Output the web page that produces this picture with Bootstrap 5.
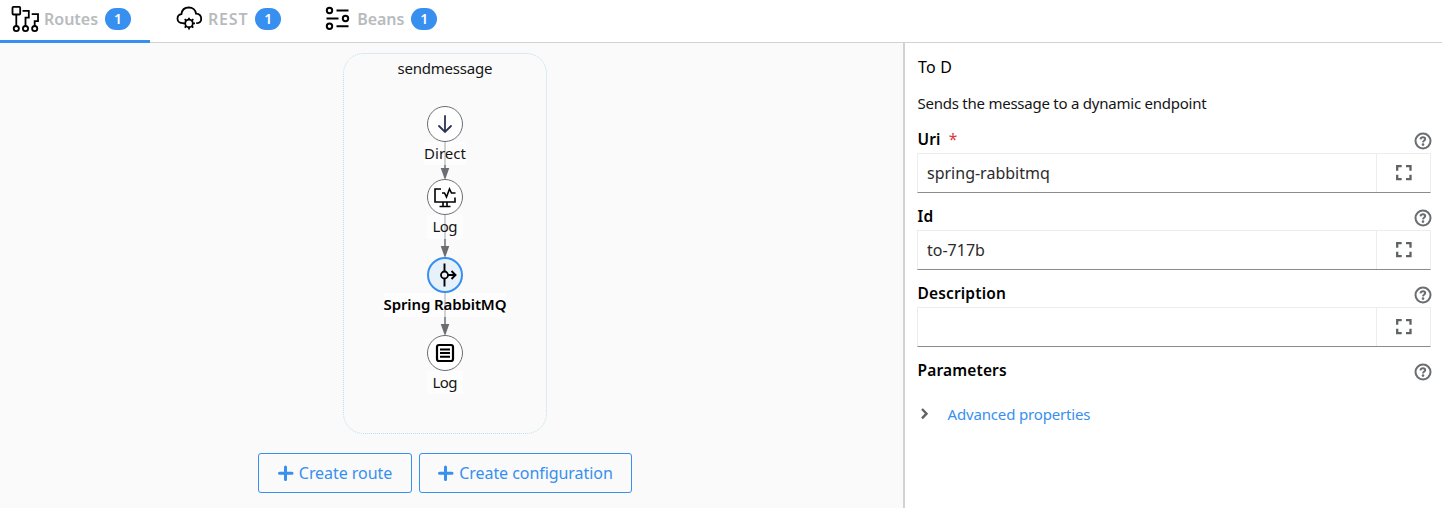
<!DOCTYPE html>
<html lang="en">
<head>
<meta charset="utf-8">
<title>Route designer</title>
<link href="https://cdn.jsdelivr.net/npm/bootstrap@5.3.0/dist/css/bootstrap.min.css" rel="stylesheet">
<script src="https://cdn.jsdelivr.net/npm/bootstrap@5.3.0/dist/js/bootstrap.bundle.min.js"></script>
<style>
body{font-family:"Noto Sans",sans-serif;font-size:16px;line-height:24px;color:#151515;height:508px;overflow:hidden;background:#fff}
.topbar{height:43px;border-bottom:1px solid #d2d2d2}
.topbar .nav-link{height:43px;padding:0 0 3px;color:#b8bbbe;font-weight:600;border-bottom:3px solid transparent}
.topbar .nav-link.active{border-bottom-color:#378fef;width:150px;padding-left:10px}
.topbar .nav-link svg{width:30px;height:30px;flex:none}
.tab-title{font-size:16px;white-space:nowrap;margin-left:4px;margin-right:7px}
.tab-rest{margin-left:25px}
.tab-rest .tab-title{margin-left:3px;letter-spacing:.8px}
.tab-beans{margin-left:42px}
.tab-beans .tab-title{margin-left:4px;letter-spacing:-.1px}
.count{background:#378fef;width:26px;height:22px;border-radius:11px;padding:0;line-height:22px;font-size:14px;font-weight:600}
.designer{width:903px;background:#fafafa;height:465px}
.designer .diagram{width:903px;height:410px;display:block}
.actions{margin-left:258px;gap:7px}
.btn-create{height:40px;border:1px solid #378fef;border-radius:3px;color:#378fef;padding:0;font-size:16px;line-height:38px;white-space:nowrap;letter-spacing:-.06px}
.btn-create svg{margin-right:5px}
.btn-route{width:154px}
.btn-config{width:213px}
.properties{border-left:2px solid #d2d2d2;height:465px;padding:12px 11px 0 12px}
.heading{font-size:16px;height:24px;padding-left:1px;letter-spacing:.2px;color:#000}
.about{font-size:15px;height:24px;margin:12px 0;padding-left:.5px;letter-spacing:-.24px}
.prop-label{height:26px;font-weight:600;font-size:15.5px;color:#000;padding-left:.5px;letter-spacing:.15px}
.prop-label svg{margin:4.500px -.5px 0 0}
.field{height:77px}
.field .input-group{height:40px;border:1px solid #ededed;border-bottom:1px solid #8a8d90;flex-wrap:nowrap}
.field .form-control{border:0;border-radius:0;padding:0 9px;font-size:16px;color:#2b2b2b;height:38px}
.field .expand-btn{width:54px;border:0;border-left:1px solid #ededed;border-radius:0;padding:0;height:38px}
.expand-btn svg{display:block;margin:0 auto}
.link-adv{color:#378fef;font-size:15px;text-decoration:none;margin-top:18px;letter-spacing:-.16px}
.link-adv span{margin-left:14.500px}
</style>
</head>
<body>
<svg width="0" height="0" class="position-absolute">
<symbol id="help" viewBox="0 0 18 18"><circle cx="9" cy="9" r="7.500" fill="none" stroke="#6a6e73" stroke-width="2"/><path d="M6.500 7.300C6.700 5.900 7.800 5.300 9 5.300c1.300 0 2.200.7 2.200 1.800C11.200 8.600 9.200 8.500 9 10.400" fill="none" stroke="#6a6e73" stroke-width="2"/><circle cx="9" cy="12.600" r="1.300" fill="#6a6e73"/></symbol>
<symbol id="expand" viewBox="0 0 16 16"><path d="M1.200 5.700V1.200H5.700M10 1.200h4.500V5.700M14.500 9.700v4.500H10M5.700 14.200H1.200V9.700" fill="none" stroke="#606366" stroke-width="2.300"/></symbol>
<symbol id="plus" viewBox="0 0 16 16"><path d="M7.500 2v12.500M1.500 8.200h12.500" fill="none" stroke="#378fef" stroke-width="3" stroke-linecap="round"/></symbol>
</svg>
<nav class="topbar nav flex-nowrap">
<a class="nav-link active d-flex align-items-center" href="#"><svg viewBox="0 0 30 30" fill="none" stroke="#000" stroke-width="1.800"><rect x="2.500" y="2.800" width="7.700" height="7.700" rx="1"/><path d="M6.300 10.500V22M12.500 6.800h6.300v6.900h-3.300V22M21.700 10.200h6.300v7h-3.300V22"/><circle cx="6.300" cy="24.600" r="2.600"/><circle cx="15.500" cy="24.600" r="2.600"/><circle cx="24.700" cy="24.600" r="2.600"/></svg><span class="tab-title">Routes</span><span class="badge count">1</span></a>
<a class="nav-link tab-rest d-flex align-items-center" href="#"><svg viewBox="0 0 30 30" fill="none" stroke="#000" stroke-width="1.800"><path d="M8.500 19.200H8c-3.200 0-5.500-1.800-5.500-4.500 0-2.500 1.700-4.200 3.900-4.500C6.900 6.300 9.700 3.500 13.800 3.500c3.900 0 6.800 2.600 7.200 6.200 3.200.2 5.200 2.300 5.200 5.200 0 2.500-1.900 4.200-5 4.300"/><circle cx="14" cy="19.400" r="3.800"/><path d="M14 13.700v2M14 23.200v2.300M8 19.400h2.300M17.800 19.400H20M9.700 15.100l1.700 1.700M16.600 22l1.700 1.700M18.300 15.100l-1.700 1.700M11.400 22l-1.700 1.700"/></svg><span class="tab-title">REST</span><span class="badge count">1</span></a>
<a class="nav-link tab-beans d-flex align-items-center" href="#"><svg viewBox="0 0 30 30" fill="none" stroke="#000" stroke-width="2"><circle cx="6.500" cy="6.500" r="2.700"/><circle cx="22.500" cy="14.500" r="2.700"/><circle cx="6.500" cy="22.300" r="2.700"/><path d="M13.500 6.500h12M3.500 14.500h12M13.500 22.300h12"/></svg><span class="tab-title">Beans</span><span class="badge count">1</span></a>
</nav>
<main class="d-flex">
<section class="designer flex-shrink-0">
<svg class="diagram" viewBox="0 43 903 410" font-family="Noto Sans,sans-serif" font-size="15" text-anchor="middle" fill="#151515">
<rect x="343.500" y="53.500" width="203" height="380" rx="20" fill="none" stroke="#b9def0" stroke-dasharray="1 1"/>
<path d="M445 142v28M445 215v33M445 293v33" stroke="#6a6e73" stroke-width="1.500"/>
<path d="M440.700 168h8.600l-4.300 12zM440.700 246h8.600l-4.300 12zM440.700 324h8.600l-4.300 12z" fill="#6a6e73"/>
<path d="M424 142h42v23h-42zM427 215h36v24h-36zM384 293h122v24H384zM427 371h36v23h-36z" fill="#fff" fill-opacity=".6"/>
<g fill="#fff" stroke="#6a6e73"><circle cx="445" cy="124" r="17.500"/><circle cx="445" cy="197" r="17.500"/><circle cx="445" cy="353" r="17.500"/></g>
<circle cx="445" cy="275" r="17" fill="#e7f1fa" stroke="#378fef" stroke-width="2"/>
<path d="M445 116v16M439 126l6 6 6-6" fill="none" stroke="#2c3454" stroke-width="1.800" stroke-linecap="round"/>
<g fill="none" stroke="#000" stroke-width="1.600"><path d="M441 189h-6v13h20v-4.500M442 193h2.500l2 4 3-8 2 4h4M443 202v4M447 202v4M439.500 206.500h11"/>
<path d="M444.500 263.500v8M444.500 278v8.500M448 275h7M451.500 271l4 4-4 4" stroke-width="1.900"/><circle cx="444.500" cy="275" r="3.500" stroke-width="1.800"/>
<rect x="437" y="345" width="16" height="16" rx="2" stroke-width="2.200"/><path d="M440 349.500h10M440 353h10M440 356.800h10" stroke-width="1.900"/></g>
<text x="445" y="74" textLength="95">sendmessage</text>
<text x="445" y="159" textLength="42">Direct</text>
<text x="445" y="232" textLength="25">Log</text>
<text x="445" y="310" textLength="123" font-weight="600" fill="#000">Spring RabbitMQ</text>
<text x="445" y="388" textLength="25">Log</text>
</svg>
<div class="actions d-flex">
<button class="btn btn-create btn-route d-flex align-items-center justify-content-center"><svg width="16" height="16"><use href="#plus"/></svg><span>Create route</span></button>
<button class="btn btn-create btn-config d-flex align-items-center justify-content-center"><svg width="16" height="16"><use href="#plus"/></svg><span>Create configuration</span></button>
</div>
</section>
<aside class="properties flex-grow-1">
<div class="heading">To D</div>
<div class="about">Sends the message to a dynamic endpoint</div>
<div class="field"><div class="prop-label d-flex justify-content-between"><span>Uri <span class="text-danger fw-normal ms-1">*</span></span><svg width="18" height="18"><use href="#help"/></svg></div><div class="input-group"><input class="form-control" value="spring-rabbitmq"><button class="btn expand-btn"><svg width="16" height="16"><use href="#expand"/></svg></button></div></div>
<div class="field"><div class="prop-label d-flex justify-content-between"><span>Id</span><svg width="18" height="18"><use href="#help"/></svg></div><div class="input-group"><input class="form-control" value="to-717b"><button class="btn expand-btn"><svg width="16" height="16"><use href="#expand"/></svg></button></div></div>
<div class="field"><div class="prop-label d-flex justify-content-between"><span>Description</span><svg width="18" height="18"><use href="#help"/></svg></div><div class="input-group"><input class="form-control" value=""><button class="btn expand-btn"><svg width="16" height="16"><use href="#expand"/></svg></button></div></div>
<div class="prop-label d-flex justify-content-between"><span>Parameters</span><svg width="18" height="18"><use href="#help"/></svg></div>
<a class="link-adv d-flex align-items-center" href="#"><svg width="16" height="16" viewBox="0 0 16 16" fill="none" stroke="#606366" stroke-width="2.400"><path d="M5 3l4.500 4.700L5 12.400"/></svg><span>Advanced properties</span></a>
</aside>
</main>
</body>
</html>
